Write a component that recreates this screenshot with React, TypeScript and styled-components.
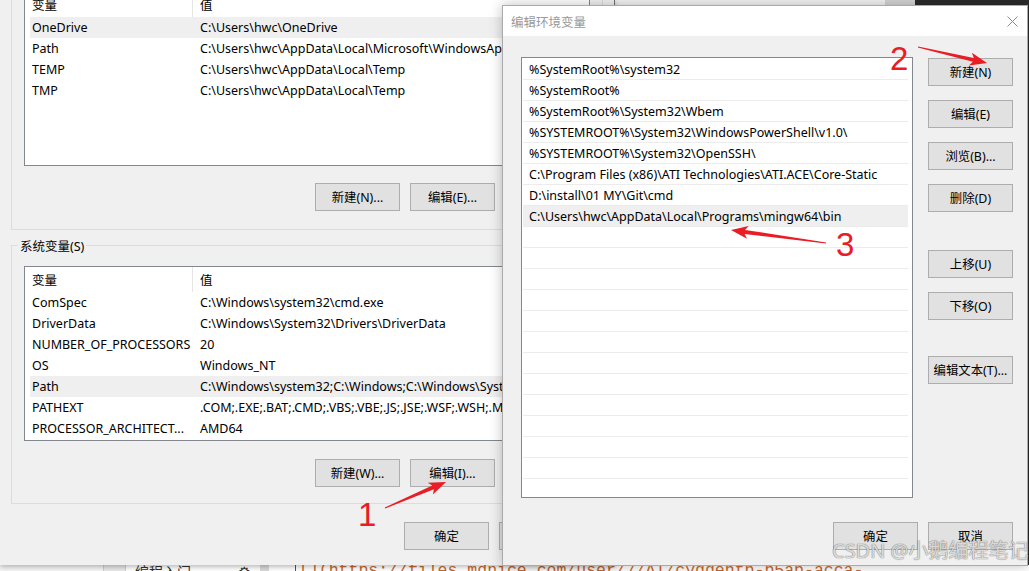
import React from "react";
import styled, { createGlobalStyle } from "styled-components";

const UI_FONT = `"Noto Sans", "Noto Sans CJK SC", sans-serif`;

const GlobalStyle = createGlobalStyle`
  html, body { margin: 0; padding: 0; background: #f0f0f0; }
  body { font-family: ${UI_FONT}; }
  * { box-sizing: border-box; }
`;

const Desktop = styled.div`
  position: relative;
  width: 1029px;
  height: 571px;
  overflow: hidden;
  display: flex;
  flex-direction: column;
  font-family: ${UI_FONT};
  font-size: 12.5px;
  color: #000;
`;

const BackRow = styled.div`
  display: flex;
  height: 565px;
  flex: none;
`;

const LeftWindow = styled.div`
  position: relative;
  z-index: 1;
  width: 615px;
  height: 565px;
  flex: none;
  background: #f0f0f0;
  border-right: 1px solid #707070;
  box-shadow: 0 2px 5px rgba(0, 0, 0, 0.28);
  display: flex;
  flex-direction: column;
`;

const Backdrop = styled.div`
  flex: 1;
  display: flex;
`;

const BackPane = styled.div<{ $w?: number; $bg: string }>`
  width: ${(p) => (p.$w ? `${p.$w}px` : "auto")};
  flex: ${(p) => (p.$w ? "none" : "1")};
  background: ${(p) => p.$bg};
`;

const GroupBox = styled.div<{ $clipTop?: boolean }>`
  margin: ${(p) => (p.$clipTop ? "-30px" : "15px")} 11px 0 11px;
  border: 1px solid #dcdcdc;
  padding: ${(p) => (p.$clipTop ? "20px" : "0")} 12px ${(p) => (p.$clipTop ? "18px" : "16px")};
  display: flex;
  flex-direction: column;
`;

const GroupTitle = styled.div`
  align-self: flex-start;
  margin: -8px 0 0 -6px;
  padding: 0 2px;
  line-height: 17px;
  background: #f0f0f0;
`;

const ListView = styled.div<{ $mt?: number }>`
  height: 175px;
  margin-top: ${(p) => p.$mt ?? 0}px;
  border: 1px solid #828790;
  background: #fff;
  overflow: hidden;
  display: flex;
  flex-direction: column;
  padding-left: 5px;
`;

const HeaderRow = styled.div`
  display: flex;
  height: 25px;
  flex: none;
`;

const HeaderCell = styled.div<{ $first?: boolean }>`
  width: ${(p) => (p.$first ? "163px" : "auto")};
  flex: ${(p) => (p.$first ? "none" : "1")};
  padding-left: ${(p) => (p.$first ? "2px" : "7px")};
  border-right: ${(p) => (p.$first ? "1px solid #e5e5e5" : "none")};
  display: flex;
  align-items: center;
  white-space: nowrap;
`;

const VarRow = styled.div<{ $selected?: boolean }>`
  display: flex;
  align-items: center;
  height: 21px;
  flex: none;
  background: ${(p) => (p.$selected ? "#efefef" : "transparent")};
  white-space: nowrap;
`;

const NameCell = styled.div`
  width: 163px;
  flex: none;
  padding-left: 2px;
  overflow: hidden;
`;

const ValueCell = styled.div`
  flex: 1;
  padding-left: 7px;
  overflow: hidden;
`;

const ButtonRow = styled.div<{ $mt: number; $pr?: number }>`
  display: flex;
  justify-content: flex-end;
  gap: 10px;
  margin-top: ${(p) => p.$mt}px;
  padding-right: ${(p) => p.$pr ?? 0}px;
`;

const Button = styled.button<{ $mt?: number }>`
  width: 85px;
  height: 28px;
  flex: none;
  margin-top: ${(p) => p.$mt ?? 0}px;
  padding: 0;
  background: #e1e1e1;
  border: 1px solid #adadad;
  font-family: ${UI_FONT};
  font-size: 12.4px;
  color: #000;
  white-space: nowrap;
`;

const BottomStrip = styled.div`
  height: 6px;
  flex: none;
  display: flex;
  overflow: hidden;
  background: #fff;
`;

const StripPane = styled.div<{ $w?: number; $bg: string; $bl?: string }>`
  width: ${(p) => (p.$w ? `${p.$w}px` : "auto")};
  flex: ${(p) => (p.$w ? "none" : "1")};
  background: ${(p) => p.$bg};
  border-left: ${(p) => (p.$bl ? `1px solid ${p.$bl}` : "none")};
  overflow: hidden;
  white-space: nowrap;
`;

const SideText = styled.div`
  margin: -3px 0 0 9px;
  font-size: 14px;
  line-height: 20px;
  color: #333;
  display: flex;
  gap: 18px;
`;

const CodeText = styled.div`
  margin: -4px 0 0 3px;
  font-family: "Liberation Mono", monospace;
  font-size: 16.5px;
  line-height: 20px;
  color: #c8682a;
`;

/* ---------- dialog ---------- */

const Dialog = styled.div`
  position: absolute;
  left: 502px;
  top: 5px;
  z-index: 2;
  width: 526px;
  border: 1px solid #aaaaaa;
  background: #f0f0f0;
  box-shadow: 0 0 12px rgba(0, 0, 0, 0.25);
  display: flex;
  flex-direction: column;
`;

const TitleBar = styled.div`
  height: 30px;
  background: #fff;
  display: flex;
  align-items: center;
  justify-content: space-between;
  padding: 0 9px 0 8px;
  color: #999;
`;

const DialogBody = styled.div`
  padding: 21px 14px 15px 18px;
  display: flex;
  flex-direction: column;
`;

const ContentRow = styled.div`
  display: flex;
  gap: 15px;
`;

const PathList = styled.div`
  width: 392px;
  height: 441px;
  border: 1px solid #828790;
  background: #fff;
  overflow: hidden;
  padding-top: 1px;
  display: flex;
  flex-direction: column;
`;

const PathRow = styled.div<{ $selected?: boolean }>`
  height: 21px;
  flex: none;
  margin: 0 4px 0 1px;
  padding-left: 6px;
  border-bottom: 1px solid #ececec;
  line-height: 21px;
  white-space: nowrap;
  background: ${(p) => (p.$selected ? "#efefef" : "transparent")};
`;

const ButtonColumn = styled.div`
  width: 85px;
  padding-top: 1px;
  display: flex;
  flex-direction: column;
`;

const DialogFooter = styled.div`
  display: flex;
  justify-content: flex-end;
  gap: 10px;
  margin-top: 24px;
`;

const Overlay = styled.svg`
  position: absolute;
  left: 0;
  top: 0;
  z-index: 3;
  pointer-events: none;
`;

const Watermark = styled.div`
  position: absolute;
  left: 832px;
  top: 539px;
  z-index: 4;
  font-family: "Noto Sans", "Noto Sans CJK SC", sans-serif;
  font-size: 20px;
  line-height: 24px;
  color: rgba(255, 255, 255, 0.8);
  text-shadow: 0 0 1px rgba(0, 0, 0, 0.55), 0 0 1px rgba(0, 0, 0, 0.35);
  white-space: nowrap;
`;

/* ---------- data ---------- */

const userVars: [string, string, boolean?][] = [
  ["OneDrive", "C:\\Users\\hwc\\OneDrive", true],
  ["Path", "C:\\Users\\hwc\\AppData\\Local\\Microsoft\\WindowsApps"],
  ["TEMP", "C:\\Users\\hwc\\AppData\\Local\\Temp"],
  ["TMP", "C:\\Users\\hwc\\AppData\\Local\\Temp"],
];

const sysVars: [string, string, boolean?][] = [
  ["ComSpec", "C:\\Windows\\system32\\cmd.exe"],
  ["DriverData", "C:\\Windows\\System32\\Drivers\\DriverData"],
  ["NUMBER_OF_PROCESSORS", "20"],
  ["OS", "Windows_NT"],
  ["Path", "C:\\Windows\\system32;C:\\Windows;C:\\Windows\\System32\\Wbem;", true],
  ["PATHEXT", ".COM;.EXE;.BAT;.CMD;.VBS;.VBE;.JS;.JSE;.WSF;.WSH;.MSC"],
  ["PROCESSOR_ARCHITECT...", "AMD64"],
];

const paths = [
  "%SystemRoot%\\system32",
  "%SystemRoot%",
  "%SystemRoot%\\System32\\Wbem",
  "%SYSTEMROOT%\\System32\\WindowsPowerShell\\v1.0\\",
  "%SYSTEMROOT%\\System32\\OpenSSH\\",
  "C:\\Program Files (x86)\\ATI Technologies\\ATI.ACE\\Core-Static",
  "D:\\install\\01 MY\\Git\\cmd",
  "C:\\Users\\hwc\\AppData\\Local\\Programs\\mingw64\\bin",
];
const SELECTED_PATH = 7;
const TOTAL_ROWS = 21;

function arrowPoints(x1: number, y1: number, x2: number, y2: number) {
  const dx = x2 - x1;
  const dy = y2 - y1;
  const L = Math.hypot(dx, dy);
  const ux = dx / L;
  const uy = dy / L;
  const nx = -uy;
  const ny = ux;
  const head = 17;
  const hw = 6.5;
  const sw = 2;
  const tw = 0.6;
  const bx = x2 - ux * head;
  const by = y2 - uy * head;
  const kx = bx + ux * 3;
  const ky = by + uy * 3;
  const pts = [
    [x1 + nx * tw, y1 + ny * tw],
    [kx + nx * sw, ky + ny * sw],
    [bx + nx * hw, by + ny * hw],
    [x2, y2],
    [bx - nx * hw, by - ny * hw],
    [kx - nx * sw, ky - ny * sw],
    [x1 - nx * tw, y1 - ny * tw],
  ];
  return pts.map(([x, y]) => `${x.toFixed(1)},${y.toFixed(1)}`).join(" ");
}

function VarList({ rows, mt }: { rows: [string, string, boolean?][]; mt?: number }) {
  return (
    <ListView $mt={mt}>
      <HeaderRow>
        <HeaderCell $first>变量</HeaderCell>
        <HeaderCell>值</HeaderCell>
      </HeaderRow>
      {rows.map(([n, v, s], i) => (
        <VarRow key={i} $selected={s}>
          <NameCell>{n}</NameCell>
          <ValueCell>{v}</ValueCell>
        </VarRow>
      ))}
    </ListView>
  );
}

export default function App() {
  const RED = "#ea1c24";
  return (
    <>
      <GlobalStyle />
      <Desktop>
        <BackRow>
          <LeftWindow>
            <GroupBox $clipTop>
              <VarList rows={userVars} />
              <ButtonRow $mt={17}>
                <Button>新建(N)...</Button>
                <Button>编辑(E)...</Button>
                <Button>删除(D)</Button>
              </ButtonRow>
            </GroupBox>
            <GroupBox>
              <GroupTitle>系统变量(S)</GroupTitle>
              <VarList rows={sysVars} mt={11} />
              <ButtonRow $mt={18}>
                <Button>新建(W)...</Button>
                <Button>编辑(I)...</Button>
                <Button>删除(L)</Button>
              </ButtonRow>
            </GroupBox>
            <ButtonRow $mt={18} $pr={30}>
              <Button>确定</Button>
              <Button>取消</Button>
            </ButtonRow>
          </LeftWindow>
          <Backdrop>
            <BackPane $w={270} $bg="#f3f3f3" />
            <BackPane $w={30} $bg="#d4d4d4" />
            <BackPane $bg="#2b2b2b" />
          </Backdrop>
        </BackRow>
        <BottomStrip>
          <StripPane $w={103} $bg="#f5f5f5" />
          <StripPane $w={22} $bg="#e8e8e8" $bl="#cfcfcf" />
          <StripPane $w={135} $bg="#ffffff" $bl="#cfcfcf">
            <SideText>
              <span>编程入门</span>
              <span>...</span>
              <span>⚙</span>
            </SideText>
          </StripPane>
          <StripPane $w={9} $bg="#d9d9d9" />
          <StripPane $w={26} $bg="#ffffff" />
          <StripPane $bg="#ffffff" $bl="#555555">
            <CodeText>[](https://files.mdnice.com/user/7/AI/cyggehtb-b5ab-acca-</CodeText>
          </StripPane>
        </BottomStrip>

        <Dialog>
          <TitleBar>
            <span>编辑环境变量</span>
            <svg width="11" height="11" viewBox="0 0 11 11">
              <path d="M0.5 0.5 L10.5 10.5 M10.5 0.5 L0.5 10.5" stroke="#8a8a8a" strokeWidth="1" fill="none" />
            </svg>
          </TitleBar>
          <DialogBody>
            <ContentRow>
              <PathList>
                {Array.from({ length: TOTAL_ROWS }).map((_, i) => (
                  <PathRow key={i} $selected={i === SELECTED_PATH}>
                    {paths[i] ?? "\u00a0"}
                  </PathRow>
                ))}
              </PathList>
              <ButtonColumn>
                <Button>新建(N)</Button>
                <Button $mt={14}>编辑(E)</Button>
                <Button $mt={14}>浏览(B)...</Button>
                <Button $mt={14}>删除(D)</Button>
                <Button $mt={38}>上移(U)</Button>
                <Button $mt={14}>下移(O)</Button>
                <Button $mt={36}>编辑文本(T)...</Button>
              </ButtonColumn>
            </ContentRow>
            <DialogFooter>
              <Button>确定</Button>
              <Button>取消</Button>
            </DialogFooter>
          </DialogBody>
        </Dialog>

        <Overlay width={1029} height={571} viewBox="0 0 1029 571">
          <polygon points={arrowPoints(385, 508, 446, 482)} fill={RED} />
          <polygon points={arrowPoints(918, 47, 987, 63)} fill={RED} />
          <polygon points={arrowPoints(826, 243, 731, 230)} fill={RED} />
          <g fill={RED} fontFamily='"Liberation Sans", Arial, sans-serif' fontSize="33">
            <text x="358" y="526">1</text>
            <text x="890" y="70">2</text>
            <text x="836" y="256">3</text>
          </g>
        </Overlay>

        <Watermark>CSDN @小鹅编程笔记</Watermark>
      </Desktop>
    </>
  );
}
